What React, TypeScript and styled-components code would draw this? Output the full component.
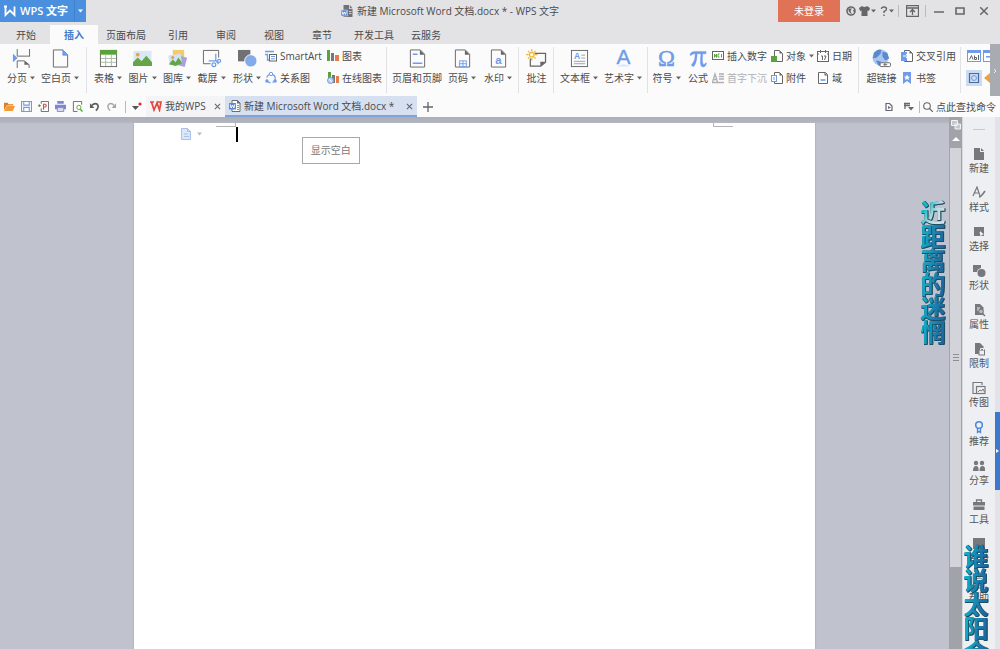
import React from "react";
import styled, { createGlobalStyle, css } from "styled-components";

const GlobalStyle = createGlobalStyle`
  *, *::before, *::after { box-sizing: border-box; }
  body { margin: 0; }
  body, button, input {
    font-family: "Open Sans", "Noto Sans CJK SC", sans-serif;
    font-size: 10px;
    line-height: 14px;
    color: #4a4a4c;
  }
  button { border: 0; padding: 0; margin: 0; background: none; cursor: pointer; white-space: nowrap; }
`;

const Shell = styled.div`
  display: flex;
  flex-direction: column;
  height: 100vh;
  overflow: hidden;
  background: #fbfbfc;
`;

/* ---------- title bar ---------- */
const TitleBar = styled.header`
  display: flex;
  align-items: flex-start;
  height: 25px;
  flex: none;
  background: #e3e3e6;
`;
const AppButton = styled.button`
  display: flex;
  align-items: center;
  height: 22px;
  width: 86px;
  flex: none;
  padding-left: 3px;
  gap: 3px;
  background: #4a90df;
  color: #fff;
  font-size: 11px;
  font-weight: 600;
`;
const AppArrow = styled.span`
  margin-left: auto;
  display: flex;
  align-items: center;
  justify-content: center;
  width: 12px;
  height: 22px;
  border-left: 1px solid #3f82cf;
`;
const Title = styled.h1`
  display: flex;
  flex: 1;
  align-items: center;
  justify-content: center;
  gap: 4px;
  margin: 0;
  padding-left: 36px;
  height: 22px;
  font-size: 10px;
  font-weight: 400;
  white-space: nowrap;
`;
const Login = styled.button`
  width: 62px;
  height: 22px;
  flex: none;
  background: #e07355;
  color: #fff;
`;
const WindowTools = styled.div`
  display: flex;
  align-items: center;
  height: 22px;
  padding: 0 1px 0 2px;
`;
const ToolButton = styled.button<{ $w?: number }>`
  display: flex;
  align-items: center;
  justify-content: center;
  gap: 1px;
  width: ${(p) => p.$w ?? 17}px;
  height: 18px;
  flex: none;
`;
const Divider = styled.span`
  width: 1px;
  height: 12px;
  background: #b9b9be;
  flex: none;
`;

/* ---------- menu tabs ---------- */
const MenuTabs = styled.nav`
  display: flex;
  align-items: stretch;
  height: 19px;
  flex: none;
  padding-left: 2px;
  background: #e3e3e6;
`;
const MenuTab = styled.button<{ $active?: boolean }>`
  min-width: 48px;
  padding: 0 8px;
  ${(p) => p.$active && css`background: #fbfbfc; color: #3d7fd0; font-weight: 600;`}
`;

/* ---------- ribbon ---------- */
const Ribbon = styled.div`
  display: flex;
  height: 52px;
  flex: none;
  background: #fbfbfc;
`;
const Groups = styled.div`
  display: flex;
  flex: 1 1 0;
  min-width: 0;
  overflow: hidden;
  padding-top: 3px;
`;
const Group = styled.section<{ $l?: number; $r?: number }>`
  display: flex;
  flex: none;
  height: 46px;
  padding: 0 ${(p) => p.$r ?? 2}px 0 ${(p) => p.$l ?? 3}px;
  border-right: 1px solid #e2e2e6;
`;
const BigButton = styled.button<{ $w: number }>`
  display: flex;
  flex-direction: column;
  align-items: center;
  width: ${(p) => p.$w}px;
  padding-top: 2px;
  gap: 3px;
`;
const Label = styled.span`
  display: flex;
  align-items: center;
  gap: 3px;
`;
const Column = styled.div<{ $w: number }>`
  display: flex;
  flex-direction: column;
  gap: 8px;
  padding-top: 2px;
  width: ${(p) => p.$w}px;
`;
const SmallButton = styled.button<{ $selected?: boolean }>`
  display: flex;
  align-items: center;
  gap: 3px;
  height: 14px;
  width: max-content;
  &:disabled { color: #b0b0b4; }
  ${(p) => p.$selected && css`background: #c9dcf4; outline: 1px solid #c9dcf4;`}
`;
const RibbonEdge = styled.button`
  width: 10px;
  flex: none;
  background: #a9abb2;
  color: #fff;
`;

/* ---------- document tab row ---------- */
const DocBar = styled.div`
  display: flex;
  align-items: stretch;
  height: 21px;
  flex: none;
  background: #fbfbfc;
`;
const Cluster = styled.div<{ $l?: number; $r?: number }>`
  display: flex;
  align-items: center;
  padding: 0 ${(p) => p.$r ?? 0}px 0 ${(p) => p.$l ?? 0}px;
`;
const DocTab = styled.div<{ $active?: boolean; $w: number }>`
  display: flex;
  align-items: center;
  gap: 3px;
  width: ${(p) => p.$w}px;
  padding: 1px 4px 0;
  background: ${(p) => (p.$active ? "#d6e0f0" : "#f4f4f6")};
  border-bottom: 2px solid ${(p) => (p.$active ? "#7fa3d6" : "#f4f4f6")};
  white-space: nowrap;
  & > button:last-child { margin-left: auto; }
`;
const DocName = styled.button`
  display: flex;
  align-items: center;
  gap: 3px;
`;
const Search = styled.label`
  display: flex;
  align-items: center;
  gap: 3px;
  padding: 0 2px 0 3px;
`;
const SearchInput = styled.input`
  width: 62px;
  border: 0;
  padding: 0;
  background: none;
  outline: none;
  &::placeholder { color: #4a4a4c; opacity: 1; }
`;
const Spacer = styled.div`
  flex: 1;
`;

/* ---------- workspace ---------- */
const Workspace = styled.div`
  display: flex;
  flex: 1 1 0;
  min-height: 0;
`;
const Canvas = styled.main`
  flex: 1 1 0;
  min-width: 0;
  display: flex;
  justify-content: center;
  padding-top: 6px;
  background: linear-gradient(#acadb7 0, #b2b4be 5px, #c0c3cd 7px);
`;
const Paper = styled.article`
  position: relative;
  width: 71.8%;
  background: #fff;
  box-shadow: 0 0 1px 1px #b4b6c0;
`;
const MarginMark = styled.span<{ $end?: boolean }>`
  position: absolute;
  top: 0;
  width: 20px;
  height: 4px;
  border-bottom: 1px solid #b5b5b5;
  ${(p) => (p.$end ? css`right: 12%; border-left: 1px solid #b5b5b5;` : css`left: 12%; border-right: 1px solid #b5b5b5;`)}
`;
const Caret = styled.span`
  position: absolute;
  left: 15%;
  top: 4px;
  width: 2px;
  height: 15px;
  background: #000;
`;
const PageMenu = styled.button`
  position: absolute;
  left: 46px;
  top: 5px;
  display: flex;
  align-items: center;
  gap: 5px;
`;
const Tooltip = styled.div`
  position: absolute;
  left: 168px;
  top: 14px;
  padding: 5px 8px;
  line-height: 15px;
  border: 1px solid #a8a8a8;
  background: #fff;
  color: #777;
  white-space: nowrap;
`;
const ScrollBar = styled.div`
  display: flex;
  flex-direction: column;
  align-items: stretch;
  width: 13px;
  flex: none;
  padding: 1px 1px 0;
  background: #a1a3ab;
`;
const ScrollCap = styled.button`
  display: flex;
  align-items: center;
  justify-content: center;
  height: 14px;
  flex: none;
`;
const ScrollThumb = styled.div`
  display: flex;
  align-items: center;
  justify-content: center;
  height: 79%;
  margin-top: 2px;
  background: #d2d4d9;
`;
const SidePanel = styled.aside`
  display: flex;
  flex-direction: column;
  align-items: center;
  width: 33px;
  flex: none;
  padding-top: 12px;
  overflow: hidden;
  background: #eeeff3;
  border-left: 1px solid #d8d9df;
`;
const Handle = styled.span`
  width: 12px;
  height: 1px;
  background: #c9cad0;
  margin-bottom: 17px;
  flex: none;
`;
const SideItem = styled.button`
  display: flex;
  flex-direction: column;
  align-items: center;
  height: 39px;
  flex: none;
  color: #555;
`;
const Rail = styled.div`
  display: flex;
  align-items: center;
  width: 5px;
  flex: none;
  padding-top: 136px;
  background: #e2e3e9;
`;
const RailTab = styled.button`
  display: flex;
  align-items: center;
  justify-content: center;
  width: 5px;
  height: 78px;
  background: #3b78cf;
`;
const ArtText = styled.div<{ $right: number; $top: number }>`
  position: absolute;
  right: ${(p) => p.$right}px;
  top: ${(p) => p.$top}px;
  width: 26px;
  font-size: 25px;
  line-height: 24px;
  font-weight: 700;
  text-align: center;
  pointer-events: none;
  filter: drop-shadow(1px 0 0 #1d4e63) drop-shadow(0 1px 0 #1d4e63);
`;
const ArtChar = styled.span<{ $lit?: boolean }>`
  display: block;
  height: 24px;
  color: transparent;
  background: ${(p) =>
    p.$lit ? "linear-gradient(120deg, #10bcc8 25%, #b9dbe0 55%, #e4e6ea)" : "linear-gradient(100deg, #12aec8 15%, #1a7cae 60%, #1f5d98)"};
  background-clip: text;
  -webkit-background-clip: text;
`;

/* ---------- icons ---------- */
const Arrow = ({ c = "#666" }: { c?: string }) => (
  <svg width="5" height="4" viewBox="0 0 5 4" aria-hidden="true"><path d="M0 .5h5L2.500 3.500z" fill={c} /></svg>
);

const B = "#6f9bea";
const K = "#666";
const sheet = <><path d="M2.500 1h10.500l4.500 4.500V19h-15z" fill="none" stroke={K} /><path d="M12.500 1v5h5z" fill={K} /></>;
const big: Record<string, React.ReactNode> = {
  分页: <><path d="M5.500 0v7.500H19M5.500 20v-7.500h7.500l5 4V20M18.500 0v7.500" fill="none" stroke={K} /><path d="M13 12.500v4h5z" fill={K} /><path d="M1 5l5 4.500-5 4.500z" fill={B} /></>,
  空白页: <><path d="M2.500 1h10l5 5v13h-15z" fill="none" stroke={K} /><path d="M12.500 1v5.500h5z" fill={B} stroke={B} /></>,
  表格: <><rect x="1.500" y="1.500" width="17" height="17" fill="#fff" stroke={K} /><path d="M1 1h18v5H1z" fill="#5ba23c" /><path d="M7 6v12M13 6v12M2 10h16M2 14h16" stroke="#a9b9a3" /></>,
  图片: <><rect x=".5" y="2" width="19" height="16" fill="#d9e8f6" /><path d="M0 18v-4l5-5 4 4 5-6 6 7v4z" fill="#65a548" /><circle cx="5" cy="6" r="2" fill="#f0a04b" /></>,
  图库: <><rect x="5" y="1" width="12" height="9" fill="#f1cd68" /><rect x="12" y="8" width="7" height="10" transform="rotate(15 15 13)" fill="#a9a2dc" /><rect x="1" y="6" width="13" height="10" transform="rotate(-8 7 11)" fill="#cfe2f7" /><path d="M1 16l4-5 3 3 3-5 4 6-7 3z" fill="#65a548" /><circle cx="5" cy="9" r="1.500" fill="#e9903b" /></>,
  截屏: <><path d="M9 15.500H1.500V1.500h16V9" fill="none" stroke={K} /><path d="M14.500 5v7.500M7 12.500h8M14.500 12l3 4" fill="none" stroke={B} strokeWidth="1.300" /><circle cx="12.500" cy="16.500" r="2" fill="none" stroke={B} strokeWidth="1.300" /><circle cx="18" cy="12.500" r="1.600" fill="none" stroke={B} strokeWidth="1.300" /></>,
  形状: <><rect x="0" y="1" width="13" height="12" fill="#707174" /><circle cx="13.500" cy="12.500" r="6.500" fill="#83abeb" stroke="#fbfbfc" /></>,
  页眉和页脚: <>{sheet}<path d="M5 5.500h5M5 15h10" stroke={B} strokeWidth="1.600" /></>,
  页码: <>{sheet}<rect x="7" y="12.500" width="7" height="6" fill="#fff" stroke={B} /><path d="M7 15.500h7M10.500 12.500v6" stroke={B} /></>,
  水印: <>{sheet}<text x="10" y="16" textAnchor="middle" fontSize="12" fontWeight="700" fontFamily="Liberation Sans" fill={B}>a</text></>,
  批注: <><path d="M8 4.500h11.500V14l-5 4h-11V10" fill="none" stroke={K} strokeWidth="1.300" /><path d="M14 18v-4.500h5.500z" fill={K} /><circle cx="5" cy="6" r="2.500" fill="#fff7d5" stroke="#f0b535" strokeWidth="1.300" /><path d="M5 0v2.500M5 9.500V12M-1 6h2.500M8.500 6H11M1 2l1.500 1.500M7.500 8.500L9 10M9 2L7.500 3.500M2.500 8.500L1 10" stroke="#f0b535" strokeWidth="1.300" /></>,
  文本框: <><rect x="1.500" y="1.500" width="17" height="17" fill="none" stroke={K} /><text x="7.500" y="11" textAnchor="middle" fontSize="9" fontWeight="700" fontFamily="Liberation Sans" fill={B}>A</text><path d="M12 6.500h4M12 9.500h4M4 13h12M4 15.500h12" stroke="#9ba0aa" /></>,
  艺术字: <><path d="M3 18.500q7-5 14 0z" fill="#dbe7fa" /><text x="10" y="16" textAnchor="middle" fontSize="22" fontFamily="Liberation Sans" stroke={B} strokeWidth=".4" fill={B}>A</text></>,
  符号: <text x="10" y="18" textAnchor="middle" fontSize="24" fontFamily="Liberation Serif" stroke={B} strokeWidth=".5" fill={B}>Ω</text>,
  公式: <path d="M1 6Q2 2.500 6 2.500H18V5H6Q3 5 2 7zM6.500 5h2Q8.500 13 6 17q-1 2-3 1-1-2 1.500-4 2-3 2-9zM12.500 5h2q-.8 8 .2 10.500 1 2 3-1l.8.500q-1 4-3.500 4-3 0-3-5 0-4 .5-9z" fill={B} stroke={B} strokeWidth=".4" />,
  超链接: <><circle cx="9" cy="9" r="8.500" fill="#a9c5f1" /><path d="M2 4q5-5 8-3l-1 4-4 4-4 1zM11 3l5 1 2 6-4 2-3-4zM4 12l5 1 1 4-3 .5z" fill="#5c89cc" /><rect x="8.500" y="14.500" width="6" height="4" rx="1" fill="#fff" stroke={K} /><rect x="13.500" y="14.500" width="6" height="4" rx="1" fill="#fff" stroke={K} /><path d="M12 16.500h4" stroke={K} /></>,
};
const note = <><path d="M3.500.5h5l3 3v8h-8z" fill="#fff" stroke={K} /><path d="M8.500.5v3h3z" fill={K} /></>;
const small: Record<string, React.ReactNode> = {
  SmartArt: <><path d="M0 1.500h9M2.500 4v6h2M0 4.500h3" fill="none" stroke={B} strokeWidth="1.300" /><rect x="4.500" y="4.500" width="7" height="6.500" fill="#fff" stroke={K} /><path d="M6 6.500h4M6 8.800h4" stroke={B} /></>,
  关系图: <><circle cx="6" cy="6.500" r="4.300" fill="none" stroke={B} strokeWidth="1.200" strokeDasharray="5 2" /><circle cx="6" cy="2" r="1.700" fill="#fff" stroke={B} /><circle cx="1.900" cy="9" r="1.700" fill={B} /><circle cx="10.100" cy="9" r="1.700" fill={B} /></>,
  图表: <><path d="M0 0h3v11H0z" fill="#5ba23c" /><path d="M4 3h3v8H4z" fill="#777" /><path d="M8 5h4v6H8z" fill="#e67c4c" /></>,
  在线图表: <><path d="M1 0h3v8H1z" fill="#5ba23c" /><path d="M5 3h3v8H5z" fill="#777" /><path d="M9 4h3v7H9z" fill="#e67c4c" /><circle cx="3.500" cy="8.500" r="3" fill="#b9d1f6" stroke={B} /><path d="M2 7l3 3" stroke="#fff" /></>,
  插入数字: <><rect x=".5" y="1.500" width="11" height="8" fill="#fff" stroke={K} /><path d="M2.500 7.500V4L4.500 7.500V4M7.500 4h-1.500v3h1.500M9.500 4v3.500" fill="none" stroke="#5ba23c" /></>,
  首字下沉: <><path d="M.5 10L3 2l2.500 8M1.500 7.500h3M7 2h5M7 4.500h5M7 7h5M0 10.500h12" fill="none" stroke="#b0b0b4" strokeWidth="1.300" /></>,
  对象: <>{note}<rect x="0" y="6" width="6" height="6" fill="#5ba23c" /></>,
  附件: <>{note}<rect x=".5" y="3.500" width="5" height="6" fill="#fff" stroke={B} /><path d="M3 5v3" stroke={B} /></>,
  日期: <><rect x=".5" y="1.500" width="11" height="10" fill="#fff" stroke={K} /><path d="M3.500 0v3M8.500 0v3M0 4h2M10 4h2M4 6h1.500v4M7 6h2L7.500 10" fill="none" stroke={K} /></>,
  域: <><path d="M1.500 .5h7l2 2v9h-9z" fill="#fff" stroke={K} /><path d="M7.500 .5v3h3z" fill={K} /><path d="M3.500 8h5" stroke={B} strokeWidth="1.600" /></>,
  交叉引用: <>{note}<rect x="0" y="2" width="6" height="9" fill={B} /><path d="M2 6h5M5 4l2 2-2 2" fill="none" stroke="#fff" /></>,
  书签: <path d="M2 0h8v12L6 9 2 12zM6 2.500L5 4.500l-2 .2 1.500 1.300L4 8l2-1 2 1-.5-2L9 4.700l-2-.2z" fill={B} fillRule="evenodd" />,
};
const Big = ({ n, w, menu }: { n: string; w: number; menu?: boolean }) => (
  <BigButton $w={w} type="button">
    <svg width="19" height="19" viewBox="0 0 20 20" aria-hidden="true" overflow="visible">{big[n]}</svg>
    <Label>{n}{menu && <Arrow />}</Label>
  </BigButton>
);
const Small = ({ n, menu, disabled }: { n: string; menu?: boolean; disabled?: boolean }) => (
  <SmallButton type="button" disabled={disabled}>
    <svg width="12" height="12" viewBox="0 0 12 12" aria-hidden="true">{small[n]}</svg>
    <Label>{n}{menu && <Arrow />}</Label>
  </SmallButton>
);

const WordIcon = () => (
  <svg width="12" height="12" viewBox="0 0 12 12" aria-hidden="true">
    <path d="M3 .5h5.500l2.500 2.500v8.500H3z" fill="#fff" stroke="#6a6d75" /><path d="M8 0l3.500 3.500H8z" fill="#6a6d75" />
    <path d="M8 5.500h2M8 7.500h2M8 9.500h2" stroke="#8a8d95" /><path d="M0 3h7v6.500H0z" fill="#5f8ad0" /><path d="M1.200 4.500l1 3.500 1.300-3 1.300 3 1-3.500" fill="none" stroke="#fff" />
  </svg>
);
const TitleIcon = () => (
  <svg width="12" height="12" viewBox="0 0 12 12" aria-hidden="true">
    <path d="M2.500 0H8v4h3.500v8h-9z" fill="#707278" /><path d="M8.800 0l2.700 3.200H8.800z" fill="#707278" />
    <path d="M8 6.500h2.500M8 8.500h2.500" stroke="#c9cad0" /><path d="M0 5h6.500v6H0z" fill="#5f8ad0" stroke="#e3e3e6" strokeWidth=".5" /><path d="M1.200 6.500l.9 3 1.200-2.500 1.200 2.500.9-3" fill="none" stroke="#fff" strokeWidth=".9" />
  </svg>
);
const Close = ({ s = 7 }: { s?: number }) => (
  <svg width={s} height={s} viewBox="0 0 8 8" aria-hidden="true"><path d="M1 1l6 6M7 1L1 7" stroke="#666" strokeWidth="1.200" /></svg>
);

const quick: [string, React.ReactNode][] = [
  ["打开", <><path d="M0 2h4l1 1.500h5V5H3L0 10z" fill="#e07f1f" /><path d="M3 5.500h9L9.500 11H0z" fill="#f59a38" /></>],
  ["保存", <><path d="M.6.600h10.800v10.800H.600z" fill="#fff" stroke={B} strokeWidth="1.200" /><path d="M3 1v3.500h6V1M3 11V7h6v4" fill="none" stroke={B} strokeWidth="1.200" /></>],
  ["输出为PDF", <><path d="M3.500 3V.500h8v11h-8V8" fill="none" stroke={K} /><path d="M6 9.500V3.500h2q2 1.500 0 3H6" fill="none" stroke="#d05050" strokeWidth="1.200" /><path d="M0 5h3M1.500 3.500v3" stroke="#5ba23c" strokeWidth="1.200" /></>],
  ["打印", <><path d="M2.500 0h7v3h-7zM0 4h12v5H0z" fill="#7f86cf" /><path d="M2.500 7h7v4.500h-7z" fill="#d8dbf4" stroke="#7f86cf" /></>],
  ["打印预览", <><path d="M10.500 4V.500h-9v11H6" fill="none" stroke={K} /><circle cx="7.500" cy="7" r="2.300" fill="#fff" stroke="#5ba23c" /><path d="M9 9l2.500 2.500" stroke="#5ba23c" strokeWidth="1.500" /></>],
  ["撤销", <><path d="M3 5q3-3.500 6-1.500 2.500 3-1.500 7" fill="none" stroke="#5d5d60" strokeWidth="1.800" /><path d="M1 2.500v5h5z" fill="#5d5d60" /></>],
  ["恢复", <><path d="M9 5Q6 1.500 3 3.500q-2.500 3 1.500 7" fill="none" stroke="#a6a6aa" strokeWidth="1.500" /><path d="M11 2.500v5H6z" fill="#a6a6aa" /></>],
];

const G = "#77787c";
const page = <path d="M3 1h5l3.500 3.500V12H3z" fill={G} />;
const panel: [string, React.ReactNode][] = [
  ["新建", <><path d="M2 1h6v4h4v8H2z" fill={G} /><path d="M9 1l3 3H9z" fill={G} /></>],
  ["样式", <><path d="M1 10L5 1l3 9M2.500 7h4" fill="none" stroke={G} strokeWidth="1.200" /><path d="M7 11q2 0 6-6" fill="none" stroke={G} strokeWidth="1.600" /></>],
  ["选择", <><path d="M2 2h10v9H9V7H7.500l1 4H2z" fill={G} /><path d="M8 6l4 3.500-2 .2-1 1.800z" fill="#eeeff3" /></>],
  ["形状", <><path d="M1 1h8v3q-4 1-4 4H1z" fill={G} /><circle cx="9.500" cy="9" r="4" fill={G} /></>],
  ["属性", <>{page}<path d="M5 5h3M5 7h2" stroke="#eeeff3" /><circle cx="9" cy="8.500" r="2.300" fill="#b9bac0" stroke={G} /><path d="M10.500 10.500L13 13" stroke={G} strokeWidth="1.500" /></>],
  ["限制", <>{page}<rect x="7" y="8" width="5.500" height="5" fill="#eeeff3" stroke={G} /><path d="M8.500 8V6.500h3V8" fill="none" stroke="#eeeff3" /></>],
  ["传图", <><path d="M4 12.500H1v-11h9V4" fill="none" stroke={G} strokeWidth="1.200" /><rect x="4.500" y="5.500" width="8.500" height="7" fill="none" stroke={G} strokeWidth="1.200" /><path d="M6 11l2-2 1.500 1 1.500-2 1.500 3" fill="none" stroke={G} /></>],
  ["推荐", <><circle cx="7" cy="5" r="3.300" fill="none" stroke="#4a86e0" strokeWidth="1.500" /><path d="M5.500 8v4.500L7 11.300l1.500 1.200V8" fill="none" stroke="#4a86e0" strokeWidth="1.300" /></>],
  ["分享", <><circle cx="4" cy="4" r="2.200" fill={G} /><circle cx="10" cy="4" r="2.200" fill={G} /><path d="M1 12q0-5 3-5t2.500 5zM7.500 12q0-5 3-5t2.500 5z" fill={G} /></>],
  ["工具", <><path d="M1 4h12v3.500H1zM1.500 8.500h11V12h-11z" fill={G} /><path d="M4.500 4V2h5v2" fill="none" stroke={G} strokeWidth="1.300" /></>],
  ["备份", <path d="M1 1h12v11H1z" fill={G} />],
  ["帮助", <><circle cx="7" cy="7" r="5" fill="none" stroke={G} /><path d="M7 4v4M7 9v1" stroke={G} /></>],
];

const tabs = ["开始", "插入", "页面布局", "引用", "审阅", "视图", "章节", "开发工具", "云服务"];

export default function App() {
  return (
    <Shell>
      <GlobalStyle />
      <TitleBar>
        <AppButton type="button">
          <svg width="14" height="12" viewBox="0 0 14 12" aria-hidden="true"><path d="M1 1.500h3M2.500 1.500v8.500L7 5.500l4.500 4.500V1.500" fill="none" stroke="#fff" strokeWidth="1.800" /></svg>
          WPS 文字
          <AppArrow><Arrow c="#fff" /></AppArrow>
        </AppButton>
        <Title><TitleIcon />新建 Microsoft Word 文档.docx * - WPS 文字</Title>
        <Login type="button">未登录</Login>
        <WindowTools>
          <ToolButton type="button" aria-label="皮肤"><svg width="10" height="10" viewBox="0 0 10 10"><circle cx="5" cy="5" r="4" fill="none" stroke={K} strokeWidth="1.600" /><path d="M2 2.500h4L4.500 5 6 8.500 3 6zM7 4l2 0-1 3z" fill={K} /></svg></ToolButton>
          <ToolButton type="button" aria-label="主题"><svg width="11" height="10" viewBox="0 0 11 10"><path d="M3 0q2.500 2 5 0l3 2-1 3L8.500 4.500V10h-6V4.500L1 5 0 2z" fill={K} /></svg><Arrow /></ToolButton>
          <ToolButton type="button" $w={22} aria-label="帮助"><svg width="8" height="10" viewBox="0 0 8 10"><path d="M1.500 3Q1.500 1 4 1t2.500 2Q6.500 4.500 4 5.500V7M4 8.500V10" fill="none" stroke={K} strokeWidth="1.400" /></svg><Arrow /></ToolButton>
          <Divider />
          <ToolButton type="button" $w={26} aria-label="隐藏功能区"><svg width="13" height="12" viewBox="0 0 13 12"><path d="M.5.500h12v11H.500zM.5 3h12M6.500 10V5M4 7l2.500-2.500L9 7" fill="none" stroke={K} strokeWidth="1.300" /></svg></ToolButton>
          <Divider />
          <ToolButton type="button" $w={25} aria-label="最小化"><svg width="10" height="8" viewBox="0 0 10 8"><path d="M0 5h10" stroke={K} strokeWidth="1.500" /></svg></ToolButton>
          <ToolButton type="button" $w={17} aria-label="最大化"><svg width="10" height="8" viewBox="0 0 10 8"><path d="M1 1h8v6H1z" fill="none" stroke={K} strokeWidth="1.600" /></svg></ToolButton>
          <ToolButton type="button" $w={31} aria-label="关闭"><Close s={10} /></ToolButton>
        </WindowTools>
      </TitleBar>

      <MenuTabs>{tabs.map((t) => <MenuTab key={t} type="button" $active={t === "插入"}>{t}</MenuTab>)}</MenuTabs>

      <Ribbon>
        <Groups>
          <Group $l={4} $r={4}><Big n="分页" w={34} menu /><Big n="空白页" w={44} menu /></Group>
          <Group $l={4}>
            <Big n="表格" w={34} menu /><Big n="图片" w={35} menu /><Big n="图库" w={34} menu /><Big n="截屏" w={35} menu /><Big n="形状" w={36} menu />
            <Column $w={62}><Small n="SmartArt" /><Small n="关系图" /></Column>
            <Column $w={57}><Small n="图表" /><Small n="在线图表" /></Column>
          </Group>
          <Group><Big n="页眉和页脚" w={54} /><Big n="页码" w={36} menu /><Big n="水印" w={36} menu /></Group>
          <Group><Big n="批注" w={29} /></Group>
          <Group><Big n="文本框" w={44} menu /><Big n="艺术字" w={44} menu /></Group>
          <Group $l={1} $r={0}>
            <Big n="符号" w={35} menu /><Big n="公式" w={28} />
            <Column $w={59}><Small n="插入数字" /><Small n="首字下沉" disabled /></Column>
            <Column $w={46}><Small n="对象" menu /><Small n="附件" /></Column>
            <Column $w={41}><Small n="日期" /><Small n="域" /></Column>
          </Group>
          <Group><Big n="超链接" w={39} /><Column $w={57}><Small n="交叉引用" /><Small n="书签" /></Column></Group>
          <Group $l={6}>
            <Column $w={16}>
              <SmallButton type="button" aria-label="窗体"><svg width="14" height="12" viewBox="0 0 14 12"><rect x=".5" y=".5" width="13" height="11" fill="#fff" stroke={B} /><path d="M0 0h14v3H0z" fill={B} /><path d="M2.500 9.500l2-4 1.500 4M7.500 5.500v4h2v-2h-2M11.500 5v5" fill="none" stroke={K} /></svg></SmallButton>
              <SmallButton type="button" $selected aria-label="控件"><svg width="14" height="14" viewBox="0 0 14 14"><path d="M2.500 2.500h9v9h-9z" fill="none" stroke="#52698f" strokeWidth="1.200" /><circle cx="7" cy="7" r="2.500" fill="none" stroke={B} /></svg></SmallButton>
            </Column>
            <Column $w={12}>
              <SmallButton type="button" aria-label="表单"><svg width="12" height="12" viewBox="0 0 12 12"><rect x=".5" y=".5" width="11" height="11" fill="#fff" stroke={B} /><path d="M0 0h12v3H0zM3 6h5v1.500H3z" fill={B} /></svg></SmallButton>
              <SmallButton type="button" aria-label="重置"><svg width="12" height="12" viewBox="0 0 12 12"><path d="M7 1v10L1 6z" fill="#eda23e" /></svg></SmallButton>
            </Column>
          </Group>
        </Groups>
        <RibbonEdge type="button" aria-label="更多"><svg width="4" height="6" viewBox="0 0 4 6"><path d="M1 1l2 2-2 2" fill="none" stroke="#eee" /></svg></RibbonEdge>
      </Ribbon>

      <DocBar>
        <Cluster $l={1} $r={5}>
          {quick.map(([n, g]) => (
            <ToolButton key={n} type="button" aria-label={n}><svg width="11" height="11" viewBox="0 0 12 12">{g}</svg></ToolButton>
          ))}
        </Cluster>
        <Cluster>
          <Divider />
          <ToolButton type="button" $w={20} aria-label="自定义"><svg width="12" height="10" viewBox="0 0 12 10"><path d="M2 4h7L5.500 8z" fill="#555" /><circle cx="10" cy="2" r="1.600" fill="#e02525" /></svg></ToolButton>
        </Cluster>
        <DocTab $w={79}>
          <DocName type="button">
            <svg width="12" height="11" viewBox="0 0 12 11" aria-hidden="true"><path d="M0 1h4M1.500 1L4 9l3-7 2.500 7L11 1H6.500" fill="none" stroke="#e2483f" strokeWidth="1.700" /></svg>
            我的WPS
          </DocName>
          <button type="button" aria-label="关闭 我的WPS"><Close /></button>
        </DocTab>
        <DocTab $active $w={192}>
          <DocName type="button"><WordIcon />新建 Microsoft Word 文档.docx *</DocName>
          <button type="button" aria-label="关闭文档"><Close /></button>
        </DocTab>
        <Cluster $l={1}><ToolButton type="button" $w={19} aria-label="新建标签"><svg width="10" height="10" viewBox="0 0 10 10"><path d="M5 0v10M0 5h10" stroke="#666" strokeWidth="1.300" /></svg></ToolButton></Cluster>
        <Spacer />
        <Cluster>
          <ToolButton type="button" $w={20} aria-label="文档"><svg width="8" height="8" viewBox="0 0 8 8"><path d="M1 .5h3.500L7 3v4.500H1z" fill="none" stroke={K} strokeWidth="1.200" /><path d="M3 3v3l3-1.500z" fill="#5a6f9c" /></svg></ToolButton>
          <ToolButton type="button" $w={20} aria-label="列表"><svg width="10" height="9" viewBox="0 0 10 9"><path d="M0 1.500h6M0 3.500h6M1 1v6" stroke={K} strokeWidth="1.300" /><path d="M4 5h6L7 8.500z" fill={K} /></svg></ToolButton>
          <Divider />
          <Search>
            <svg width="10" height="10" viewBox="0 0 10 10" aria-hidden="true"><circle cx="4" cy="4" r="3.300" fill="none" stroke={K} strokeWidth="1.100" /><path d="M6.500 6.500L10 10" stroke={K} strokeWidth="1.200" /></svg>
            <SearchInput type="text" aria-label="查找命令" placeholder="点此查找命令" />
          </Search>
        </Cluster>
      </DocBar>

      <Workspace>
        <Canvas>
          <Paper>
            <MarginMark /><MarginMark $end />
            <PageMenu type="button" aria-label="页面选项">
              <svg width="12" height="12" viewBox="0 0 12 12"><path d="M1.500.500h6l3 3v8h-9z" fill="#dce7fa" stroke="#a9c0ea" /><path d="M7.500.500v3h3M4 6h4M4 8.500h5" fill="none" stroke="#a9c0ea" /></svg>
              <Arrow c="#bbb" />
            </PageMenu>
            <Caret />
            <Tooltip role="tooltip">显示空白</Tooltip>
          </Paper>
        </Canvas>
        <ScrollBar>
          <ScrollCap type="button" aria-label="选择浏览对象"><svg width="10" height="10" viewBox="0 0 10 10"><path d="M.5.500h6v5h-6zM4 4h5.500v5H4z" fill="#c6c7ce" stroke="#f2f2f5" /></svg></ScrollCap>
          <ScrollCap type="button" aria-label="向上滚动"><svg width="8" height="4" viewBox="0 0 8 4"><path d="M4 0l4 4H0z" fill="#fff" /></svg></ScrollCap>
          <ScrollThumb><svg width="6" height="8" viewBox="0 0 6 8" aria-hidden="true"><path d="M0 .5h6M0 3.500h6M0 6.500h6" stroke="#8d8f97" /></svg></ScrollThumb>
        </ScrollBar>
        <SidePanel>
          <Handle />
          {panel.map(([n, g]) => (
            <SideItem key={n} type="button">
              <svg width="14" height="14" viewBox="0 0 14 14" aria-hidden="true">{g}</svg>
              {n}
            </SideItem>
          ))}
        </SidePanel>
        <Rail><RailTab type="button" aria-label="展开"><svg width="3" height="4" viewBox="0 0 3 4"><path d="M0 0l3 2-3 2z" fill="#fff" /></svg></RailTab></Rail>
      </Workspace>

      <ArtText $right={54} $top={200}>
        {[..."近距离的迷惘"].map((c, i) => <ArtChar key={i} $lit={i === 0}>{c}</ArtChar>)}
      </ArtText>
      <ArtText $right={11} $top={544}>
        {[..."谁说太阳会"].map((c, i) => <ArtChar key={i}>{c}</ArtChar>)}
      </ArtText>
    </Shell>
  );
}
